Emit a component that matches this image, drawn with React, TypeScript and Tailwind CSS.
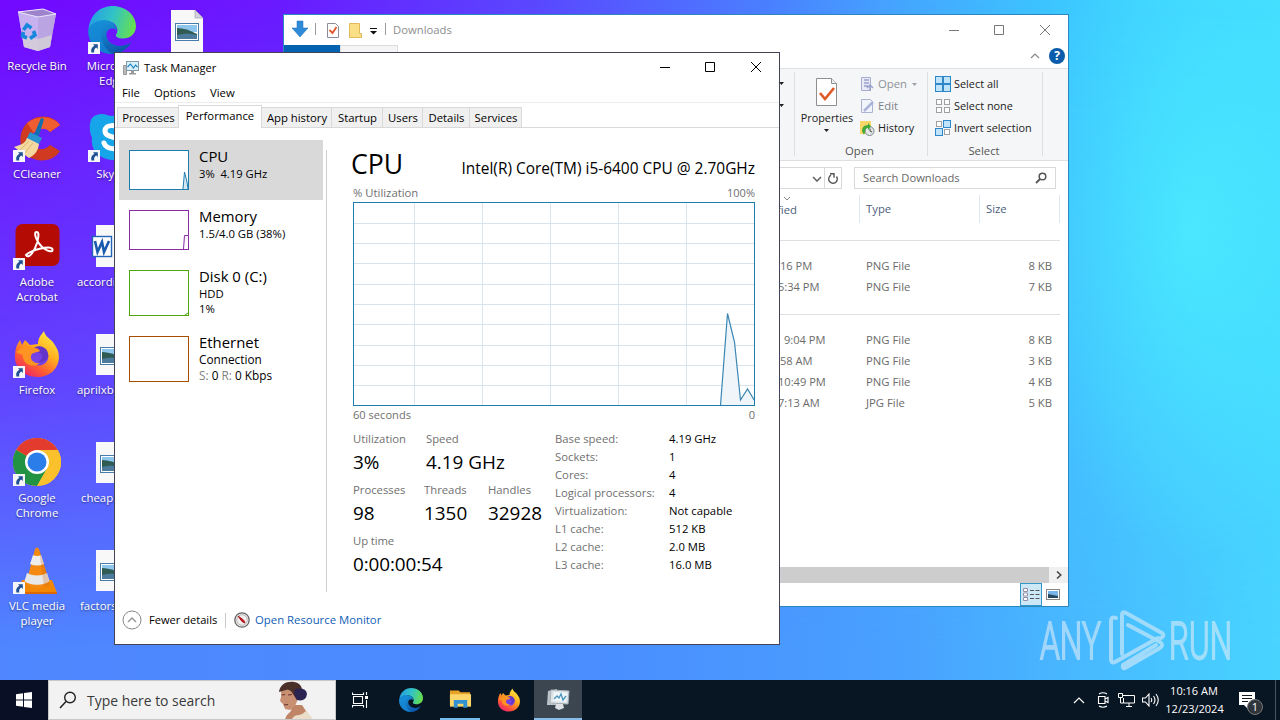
import React from "react";

type P = { className?: string };

/* ---------- shared drawings ---------- */

function Shortcut() {
  return (
    <svg viewBox="0 0 12 12" className="absolute bottom-0 left-0 h-3 w-3">
      <rect width="12" height="12" fill="#f4f6fa" />
      <path d="M5 2.2h4.8V7L8.3 5.6C6.6 6.6 5.8 8 6.2 10.4H3.4C2.6 7.6 3.8 5 6.4 3.8z" fill="#1f4f93" />
    </svg>
  );
}

function RecycleBin() {
  return (
    <svg viewBox="0 0 48 48" className="h-12 w-12">
      <path d="M5 6l25-3 13 5-6 33-12 4-14-4z" fill="#d9cdf6" opacity=".8" />
      <path d="M5 6l20 5 0 34-14-4z" fill="#c8b4ee" opacity=".75" />
      <path d="M25 11l18-3-6 33-12 4z" fill="#b9a4dc" opacity=".8" />
      <path d="M9 30l16 3v12l-14-4zM25 33l14-4-2 12-12 4z" fill="#d6d2d6" opacity=".8" />
      <path d="M5 6l25-3 13 5-18 3z" fill="#9c83cb" stroke="#ece6fb" strokeWidth="1" />
      <g fill="none" stroke="#1787dc" strokeWidth="3.6">
        <path d="M10.500 24l3.500-5 4.500 3" />
        <path d="M20.500 25l1.500 4-5 3.500" />
        <path d="M14 32l-4.500-2 1-4" />
      </g>
    </svg>
  );
}

function EdgeLogo({ className }: P) {
  const id = React.useId();
  return (
    <svg viewBox="0 0 48 48" className={className}>
      <defs>
        <linearGradient id={id + "a"} x1="0" y1=".3" x2="1" y2=".5">
          <stop offset="0" stopColor="#239de4" />
          <stop offset=".5" stopColor="#32c3c6" />
          <stop offset="1" stopColor="#67df4c" />
        </linearGradient>
        <linearGradient id={id + "b"} x1="0" y1="0" x2=".6" y2="1">
          <stop offset="0" stopColor="#1b9de2" />
          <stop offset="1" stopColor="#0c57ab" />
        </linearGradient>
      </defs>
      <path d="M.5 23C2 9 12 0 24.500 0 38 0 48 9.500 48 20c0 8-6 12.500-13 12.500-5 0-8-2-7-4 3-4 1-11-6-13C13 13 4 16 .5 23z" fill={`url(#${id}a)`} />
      <path d="M.5 23C4 15 14 12 22 15.500c5 2 7 6 6.500 9-1-3-9-3-10 3-1 8 8 14 17 12 4-.8 6-2 8-3.500C39 44 32 48 24 48 10 48-1 37 .5 23z" fill={`url(#${id}b)`} />
      <path d="M16 19c-5 9-3 21 8 29C11 48-1 38 .5 23 5 15 14 14 18 17z" fill="#1689d6" opacity=".75" />
    </svg>
  );
}

function CCleaner() {
  return (
    <svg viewBox="0 0 48 48" className="h-12 w-12">
      <path d="M47 11L37 18c-5-6-16-4-18 5-2 10 9 17 18 8l10 6C40 48 25 49 15 42 3 32 6 13 18 6c10-6 23-4 29 5z" fill="#cf3a20" />
      <path d="M47 11L37 18c-4-5-12-4-16 1L14 9c11-8 26-7 33 2z" fill="#f05d31" />
      <path d="M28 4l3 1-6 20-5-2z" fill="#146fae" />
      <path d="M17 18l12 6-4 8-12-6z" fill="#2993cf" />
      <path d="M14 24l12 6c-1 7-4 11-10 14L1 33c6-2 11-3 13-9z" fill="#f3d9a0" />
      <path d="M16 27L7 36M20 29l-9 11" stroke="#dcb877" strokeWidth="1" />
    </svg>
  );
}

function SkypeLogo() {
  return (
    <svg viewBox="0 0 48 48" className="h-12 w-12">
      <path d="M4 4c6-6 14-4 18-2 16-2 25 12 22 24 4 7 2 20-10 19C18 49 2 40 4 24 1 18 1 8 4 4z" fill="#15a5e8" />
      <path d="M32 16c-3-6-15-6-15 1 0 8 15 4 15 12 0 8-14 7-16 0" fill="none" stroke="#fff" strokeWidth="5" strokeLinecap="round" />
    </svg>
  );
}

function Acrobat() {
  return (
    <svg viewBox="0 0 48 48" className="h-12 w-12">
      <rect x="2.500" y="2" width="44" height="42" rx="7" fill="#b50b05" />
      <path d="M13 33c3 5 9-5 11-12 2-8 2-11-.5-11-3.500 0 0 11 7.500 16.500 4 3 9 4 8.500 1-1-4.500-21 0-26.500 5.500z" fill="none" stroke="#fff" strokeWidth="2" />
    </svg>
  );
}

function FirefoxLogo({ className }: P) {
  const id = React.useId();
  return (
    <svg viewBox="0 0 48 48" className={className}>
      <defs>
        <linearGradient id={id} x1=".85" y1="0" x2=".2" y2="1">
          <stop offset="0" stopColor="#fff04a" />
          <stop offset=".4" stopColor="#ffb01e" />
          <stop offset=".72" stopColor="#ff5a33" />
          <stop offset="1" stopColor="#e81f77" />
        </linearGradient>
      </defs>
      <path d="M31 1c1 5 4 6 8 10 3 4 5 7 6 10 4 14-6 26-21 26C10 47 1 37 2 25c0-6 2-11 5-15l2 5 3-5 5 5 8-1c0-6 3-9 6-13z" fill={`url(#${id})`} />
      <circle cx="26" cy="26" r="9.500" fill="#7542e5" />
      <path d="M26 16c6 0 10 5 9 11-2 4-6 6-10 5 7-4 5-10-2-10l-5 2c1-4 4-8 8-8z" fill="#5b2fbe" opacity=".7" />
      <path d="M3 22c5-4 9-7 18-4 3 0 5 1 6 3-4 2-8 1-9 5-1 5 5 8 9 7-7 6-18 1-17-8-3-1-5-2-7-3z" fill="#ff9423" />
    </svg>
  );
}

function ChromeLogo() {
  return (
    <svg viewBox="0 0 48 48" className="h-12 w-12">
      <circle cx="24" cy="24" r="24" fill="#fbc12d" />
      <path d="M24 24L3.200 12A24 24 0 0 1 44.800 12z" fill="#e33b2e" />
      <path d="M24 24L3.200 12A24 24 0 0 0 24 48L34.400 30z" fill="#229342" />
      <path d="M24 12h20.800A24 24 0 0 1 24 48L34.400 30z" fill="#fbc12d" />
      <circle cx="24" cy="24" r="12" fill="#fff" />
      <circle cx="24" cy="24" r="9.500" fill="#2b7de9" />
    </svg>
  );
}

function VlcLogo() {
  return (
    <svg viewBox="0 0 48 48" className="h-12 w-12">
      <path d="M9 34h30l5 13v1H7V40z" fill="#f28705" />
      <path d="M7 46h37v2H7z" fill="#dd6900" />
      <path d="M22 3q2-3 4 0l11 35c-5 5-19 5-24 0z" fill="#f58a13" />
      <path d="M20 9q4 2 8 0l3 9q-7 3-14 0z" fill="#eeeeee" />
      <path d="M14 27q10 5 20 0l2.500 8c-5 5-20 5-25 0z" fill="#e8e8e8" />
      <path d="M26 3l11 35q-3 3-6 3z" fill="#c95a00" opacity=".25" />
    </svg>
  );
}

function PictureFile({ fold }: { fold?: boolean }) {
  return (
    <svg viewBox="0 0 48 48" className="h-12 w-12">
      <path d={fold ? "M8 4h24l8 8v35H8z" : "M8 4h32v41H8z"} fill="#f8f8f8" />
      {fold && <path d="M32 4v8h8z" fill="#d2d2dc" stroke="#a5a5b4" strokeWidth=".7" />}
      <rect x="12.500" y="17.500" width="23" height="17" fill="#fff" stroke="#477ba9" />
      <path d="M14 19h20v7H14z" fill="#8dc5ec" />
      <path d="M14 22q9 0 20 6v2H14z" fill="#2f5b52" />
      <path d="M14 29q10-3 20 0v4H14z" fill="#4c7b9c" />
    </svg>
  );
}

function WordFile() {
  return (
    <svg viewBox="0 0 48 48" className="h-12 w-12">
      <path d="M8 3h32v42H8z" fill="#f8f8f8" />
      <rect x="4.500" y="14.500" width="19" height="20" fill="#fff" stroke="#2164b8" strokeWidth="1.400" />
      <path d="M7 19l2.500 11 4.500-10 2 10L21 19" fill="none" stroke="#1a5bb0" strokeWidth="2.600" />
    </svg>
  );
}

/* ---------- desktop ---------- */

function DesktopItem({ icon, label, shortcut = true }: { icon: React.ReactNode; label: React.ReactNode; shortcut?: boolean }) {
  return (
    <div className="flex h-[108px] flex-col items-center">
      <div className="relative h-12 w-12">
        {icon}
        {shortcut && <Shortcut />}
      </div>
      <div className="mt-[4px] w-full text-center text-[11.4px] leading-[15px] whitespace-nowrap text-white [text-shadow:0_1px_2px_rgba(0,0,0,.5)]">{label}</div>
    </div>
  );
}

function Desktop() {
  return (
    <div className="relative flex pt-[6px]">
      <div className="flex w-[74px] shrink-0 flex-col">
        <DesktopItem icon={<RecycleBin />} label="Recycle Bin" shortcut={false} />
        <DesktopItem icon={<CCleaner />} label="CCleaner" />
        <DesktopItem icon={<Acrobat />} label={<>Adobe<br />Acrobat</>} />
        <DesktopItem icon={<FirefoxLogo className="h-12 w-12" />} label="Firefox" />
        <DesktopItem icon={<ChromeLogo />} label={<>Google<br />Chrome</>} />
        <DesktopItem icon={<VlcLogo />} label={<>VLC media<br />player</>} />
      </div>
      <div className="flex w-[76px] shrink-0 flex-col">
        <DesktopItem icon={<EdgeLogo className="h-12 w-12" />} label={<>Microsoft<br />Edge</>} />
        <DesktopItem icon={<SkypeLogo />} label="Skype" />
        <DesktopItem icon={<WordFile />} label={<div className="pl-[3px] text-left">accordi</div>} shortcut={false} />
        <DesktopItem icon={<PictureFile />} label={<div className="pl-[3px] text-left">aprilxb</div>} shortcut={false} />
        <DesktopItem icon={<PictureFile />} label={<div className="pl-[7px] text-left">cheapl</div>} shortcut={false} />
        <DesktopItem icon={<PictureFile />} label={<div className="pl-[6px] text-left">factors</div>} shortcut={false} />
      </div>
      <div className="flex w-[74px] shrink-0 flex-col">
        <DesktopItem icon={<PictureFile fold />} label="" shortcut={false} />
      </div>
    </div>
  );
}

function Watermark() {
  return (
    <svg viewBox="0 0 200 68" className="absolute top-[606px] left-[1036px] h-[68px] w-[200px] overflow-visible opacity-60">
      <g fill="#dcecf8" fontFamily="Roboto, sans-serif" fontSize="51.500" fontWeight="300" stroke="#dcecf8" strokeWidth="2">
        <text x="4" y="53" textLength="61" lengthAdjust="spacingAndGlyphs">ANY</text>
        <text x="133" y="53" textLength="63" lengthAdjust="spacingAndGlyphs">RUN</text>
      </g>
      <g fill="none" stroke="#dcecf8" strokeWidth="4" strokeLinejoin="round" strokeLinecap="round">
        <path d="M80 12q-5-2-5 3v38q0 5 4 3l43-24" />
        <path d="M86 48V9q0-4 4-2l36 20q3 3-1 5" />
        <path d="M92 19l32 17q4 3 0 6L89 62q-3 1-2-3l33-20" />
      </g>
    </svg>
  );
}

/* ---------- window controls ---------- */

function Controls({ color }: { color: string }) {
  return (
    <div className="flex h-[30px]" style={{ color }}>
      {["M1 5.500h10", "M.5 .5h9v9h-9z", "M0 0l10 10M10 0L0 10"].map((d, i) => (
        <div key={i} className="flex w-[46px] items-center justify-center">
          <svg viewBox="0 0 10 10" className="h-[10px] w-[10px] overflow-visible">
            <path d={d} fill="none" stroke="currentColor" strokeWidth="1" />
          </svg>
        </div>
      ))}
    </div>
  );
}

/* ---------- file explorer ---------- */

function SelectGlyph({ kind }: { kind: "all" | "none" | "invert" }) {
  const on = kind === "all" ? [1, 1, 1, 1] : kind === "none" ? [0, 0, 0, 0] : [0, 1, 1, 0];
  return (
    <svg viewBox="0 0 16 16" className="h-4 w-4">
      {on.map((v, i) => {
        const x = (i % 2) * 8;
        const y = Math.floor(i / 2) * 8;
        return v ? (
          <rect key={i} x={x + 0.5} y={y + 0.5} width="7" height="7" fill="#bfe3fa" stroke="#2f87c8" />
        ) : (
          <rect key={i} x={x + 1.5} y={y + 1.5} width="5" height="5" fill="#fff" stroke="#a0a0a0" />
        );
      })}
    </svg>
  );
}

function FileRow({ date, pad, type, size }: { date: string; pad: string; type: string; size: string }) {
  return (
    <div className="flex h-[21px] items-center text-[#6b6b6b]">
      <div className={"w-[88px] whitespace-nowrap text-[11.1px] " + pad}>{date}</div>
      <div className="w-[120px]">{type}</div>
      <div className="w-[66px] text-right">{size}</div>
    </div>
  );
}

function Explorer() {
  return (
    <div className="absolute top-[14px] left-[283px] flex h-[593px] w-[786px] flex-col border border-[#2c86c0] bg-white text-[11.3px]">
      <div className="flex h-[30px] items-center">
        <svg viewBox="0 0 104 20" className="ml-[6px] h-5 w-[104px]">
          <path d="M7 1h6v7h5l-8 9-8-9h5z" fill="#2f8bd8" stroke="#1f6fb8" strokeWidth=".5" />
          <path d="M25.500 3v12M95.500 3v12" stroke="#9a9a9a" />
          <path d="M37.500 3.500h8l3 3v11h-11z" fill="#fff" stroke="#8c8c9c" />
          <path d="M39.500 10l3 3 4-6" fill="none" stroke="#e0562c" strokeWidth="1.800" />
          <path d="M59.500 3.500h10v10h2v4h-12z" fill="#fbdf86" stroke="#e2b958" />
          <path d="M80 8.500h7" stroke="#111" />
          <path d="M80 11h7l-3.500 3.500z" fill="#111" />
        </svg>
        <span className="ml-[-1px] text-[11.3px] text-[#8d8d8d]">Downloads</span>
        <div className="ml-auto"><Controls color="#777" /></div>
      </div>
      <div className="flex h-[23px]">
        <div className="h-full w-[56px] bg-[#0063b1]" />
        <div className="h-full w-[58px] border border-[#dcdcdc] bg-[#f5f5f5]" />
        <svg viewBox="0 0 10 6" className="mt-[8px] ml-auto h-[6px] w-[10px]"><path d="M1 5l4-4 4 4" fill="none" stroke="#888" strokeWidth="1.200" /></svg>
        <div className="mt-[3px] mr-[3px] ml-[9px] flex h-4 w-4 items-center justify-center rounded-full bg-[#0b5cab] text-[12px] font-bold text-white">?</div>
      </div>
      <div className="flex h-[93px] justify-end border-y border-[#dddfe1] bg-[#f5f6f7] pt-[3px] pb-[4px] text-[#222]">
        <div className="flex w-[300px] flex-col items-end pt-[9px] pr-[10px]">
          <svg viewBox="0 0 5 26" className="h-[26px] w-[5px]"><path d="M0 1h5L2.500 4zM0 23h5l-2.500 3z" fill="#222" /></svg>
        </div>
        <div className="flex w-[133px] flex-col border-l border-[#dddfe1]">
          <div className="flex h-[72px] shrink-0">
            <div className="flex w-[64px] flex-col items-center pt-[5px]">
              <svg viewBox="0 0 24 30" className="h-[30px] w-6">
                <path d="M1.500 1.500h15l5 5v22h-20z" fill="#fff" stroke="#8f8f8f" />
                <path d="M16.500 1.500v5h5" fill="#eee" stroke="#8f8f8f" />
                <path d="M5 16l5 6 9-11" fill="none" stroke="#df5a24" strokeWidth="2.700" />
              </svg>
              <span className="mt-[3px] text-[10.800px] leading-[15px]">Properties</span>
              <svg viewBox="0 0 5 3" className="mt-[4px] -ml-px h-[3px] w-[5px]"><path d="M0 0h5L2.500 3z" fill="#222" /></svg>
            </div>
            <div className="flex flex-col pt-px">
              <div className="flex h-[22px] items-center gap-[3px] text-[#8e939b]">
                <svg viewBox="0 0 16 16" className="h-4 w-4"><path d="M2.500 1.500h9v13h-9z" fill="#e8eaf6" stroke="#a7acd2" /><path d="M5 4h5M5 7h5M5 10h4M11 15l0-6M8 12l3-3 3 3" stroke="#9ba3cc" strokeWidth="1.500" fill="none" /></svg>
                Open
                <svg viewBox="0 0 5 3" className="ml-[2px] h-[3px] w-[5px]"><path d="M0 0h5L2.500 3z" fill="#a0a0a8" /></svg>
              </div>
              <div className="flex h-[22px] items-center gap-[3px] text-[#7e838b]">
                <svg viewBox="0 0 16 16" className="h-4 w-4"><path d="M2.500 1.500h9l2 2v11h-11z" fill="#f1f4fb" stroke="#abb3d0" /><path d="M5 13L14 4" stroke="#aab4d8" strokeWidth="2.500" /></svg>
                Edit
              </div>
              <div className="flex h-[22px] items-center gap-[3px] text-[10.900px]">
                <svg viewBox="0 0 16 16" className="h-4 w-4"><path d="M1 1h11v13H1z" fill="#f8d667" /><circle cx="10.500" cy="11" r="4.500" fill="#e0e7e4" stroke="#7d8790" /><path d="M3 11q0-6 6-6V3l3 3.500L9 10V8q-3 0-3 4l-1 3z" fill="#41a839" /><path d="M11 8.500V11l2 1" fill="none" stroke="#444" /></svg>
                History
              </div>
            </div>
          </div>
          <div className="pr-[3px] text-center leading-[13px] text-[#555]">Open</div>
        </div>
        <div className="mr-[25px] flex w-[116px] flex-col border-x border-[#dddfe1]">
          <div className="flex h-[72px] shrink-0 flex-col pt-px pl-[7px] text-[10.900px]">
            {(["all", "none", "invert"] as const).map((k, i) => (
              <div key={k} className="flex h-[22px] items-center gap-[3px] whitespace-nowrap">
                <SelectGlyph kind={k} />
                {["Select all", "Select none", "Invert selection"][i]}
              </div>
            ))}
          </div>
          <div className="pr-[2px] text-center leading-[13px] text-[#555]">Select</div>
        </div>
      </div>
      <div className="flex h-[34px] items-center justify-end pr-[12px]">
        <div className="flex h-[22px] w-[500px] items-center justify-end border border-[#d9d9d9]">
          <svg viewBox="0 0 10 6" className="mt-[2px] mr-[2px] h-[6px] w-[10px]"><path d="M1 1l4 4 4-4" fill="none" stroke="#666" strokeWidth="1.600" /></svg>
          <div className="flex h-full w-[17px] items-center justify-center border-l border-[#d9d9d9]">
            <svg viewBox="0 0 12 12" className="mt-px h-3 w-3"><path d="M9.500 3.500A4.300 4.300 0 1 1 4 2.200M3 .8h4v4" fill="none" stroke="#555" strokeWidth="1.400" /></svg>
          </div>
        </div>
        <div className="ml-[12px] flex h-[22px] w-[202px] items-center border border-[#d9d9d9] pr-[8px] pl-[8px] text-[11.200px] text-[#686868]">
          Search Downloads
          <svg viewBox="0 0 12 12" className="ml-auto h-3 w-3"><circle cx="7.500" cy="4.500" r="3.300" fill="none" stroke="#555" strokeWidth="1.500" /><path d="M5 7L1 11" stroke="#555" strokeWidth="1.800" /></svg>
        </div>
      </div>
      <div className="flex h-[45px] justify-end pr-[8px] text-[#4c607a]">
        <div className="flex w-[85px] flex-col pt-[1px]">
          <svg viewBox="0 0 8 5" className="ml-[9px] h-[5px] w-[8px]"><path d="M1 1l3 3 3-3" fill="none" stroke="#888" /></svg>
          <span className="mt-px ml-[3px] leading-[15px]">fied</span>
        </div>
        <div className="flex h-[28px] w-[120px] items-center border-l border-[#dfe7f0] pl-[6px]">Type</div>
        <div className="flex h-[28px] w-[81px] items-center border-x border-[#dfe7f0] pl-[6px]">Size</div>
      </div>
      <div className="ml-[494px] flex w-[282px] flex-col">
        <div className="h-[16px] border-t border-[#dfdfdf]" />
        <FileRow date="16 PM" pad="pl-[2px]" type="PNG File" size="8 KB" />
        <FileRow date="5:34 PM" pad="pl-0" type="PNG File" size="7 KB" />
        <div className="mt-[16px] h-[16px] border-t border-[#dfdfdf]" />
        <FileRow date="9:04 PM" pad="pl-[6px]" type="PNG File" size="8 KB" />
        <FileRow date="58 AM" pad="pl-[2px]" type="PNG File" size="3 KB" />
        <FileRow date="10:49 PM" pad="pl-0" type="PNG File" size="4 KB" />
        <FileRow date="7:13 AM" pad="pl-0" type="JPG File" size="5 KB" />
      </div>
      <div className="mt-auto flex h-[16px] bg-[#f0f0f0]">
        <div className="flex-1 bg-[#cdcdcd]" />
        <div className="flex w-[19px] items-center justify-center pl-px"><svg viewBox="0 0 6 8" className="h-2 w-[6px]"><path d="M1 .5L4.800 4 1 7.500" fill="none" stroke="#444" strokeWidth="1.500" /></svg></div>
      </div>
      <div className="flex h-[23px] items-center justify-end pr-[8px]">
        <div className="flex h-full w-[22px] items-center justify-center border border-[#3397c9] bg-[#cce8f6]">
          <svg viewBox="0 0 17 13" className="h-[13px] w-[17px]"><path d="M.5 .5h4v3h-4zM.5 5h4v3h-4zM.5 9.500h4v3h-4z" fill="#fff" stroke="#9a8fa8" /><path d="M7 2.500h4M12.500 2.500h4M7 6.500h4M12.500 6.500h4M7 10.500h4M12.500 10.500h4" stroke="#555" /></svg>
        </div>
        <svg viewBox="0 0 14 12" className="ml-[4px] h-3 w-[14px]"><rect x=".5" y=".5" width="13" height="10" fill="#fff" stroke="#888" /><path d="M2 2h10v7H2z" fill="#78b5e8" /><path d="M2 5l10 2v2H2z" fill="#28475c" /></svg>
      </div>
    </div>
  );
}

/* ---------- task manager ---------- */

const tabs: [string, string][] = [
  ["Processes", "w-[61px]"],
  ["Performance", "w-[84px]"],
  ["App history", "w-[70px]"],
  ["Startup", "w-[51px]"],
  ["Users", "w-[40px]"],
  ["Details", "w-[47px]"],
  ["Services", "w-[52px]"],
];

function Thumb({ h, color, d, fill }: { h: number; color: string; d?: string; fill?: string }) {
  return (
    <svg width="60" height={h} viewBox={`0 0 60 ${h}`} className="shrink-0">
      <rect x=".5" y=".5" width="59" height={h - 1} fill="#fff" stroke={color} />
      {d && <path d={d} fill={fill} stroke={color} strokeWidth="1" />}
    </svg>
  );
}

function Chart() {
  const xs = [61.5, 129.5, 197.5, 265.5, 333.5];
  const ys = [21.5, 41.5, 61.5, 82.5, 102.5, 122.5, 143.5, 163.5, 183.5];
  return (
    <svg width="402" height="204" viewBox="0 0 402 204">
      <rect x=".5" y=".5" width="401" height="203" fill="#fff" />
      {xs.map((x) => <path key={x} d={`M${x} 1v202`} stroke="#d9e6ef" />)}
      {ys.map((y) => <path key={y} d={`M1 ${y}h400`} stroke="#d9e3ec" />)}
      <path d="M367.500 203.500L374.500 111.500 381.500 140 387.500 198 394.500 187 401.500 198.500V203.500z" fill="#eef4fa" fillOpacity=".9" />
      <path d="M367.500 203.500L374.500 111.500 381.500 140 387.500 198 394.500 187 401.500 198.500" fill="none" stroke="#3a86b4" strokeWidth="1.200" />
      <rect x=".5" y=".5" width="401" height="203" fill="none" stroke="#1f7dae" />
    </svg>
  );
}

function Stat({ label, value, w }: { label: string; value: string; w: string }) {
  return (
    <div className={"flex h-[51px] flex-col whitespace-nowrap " + w}>
      <span className="leading-[16px] text-[#707070]">{label}</span>
      <span className="text-[18.900px] leading-[30px]">{value}</span>
    </div>
  );
}

const facts = [
  ["Base speed:", "4.19 GHz"],
  ["Sockets:", "1"],
  ["Cores:", "4"],
  ["Logical processors:", "4"],
  ["Virtualization:", "Not capable"],
  ["L1 cache:", "512 KB"],
  ["L2 cache:", "2.0 MB"],
  ["L3 cache:", "16.0 MB"],
];

function MonitorIcon({ className }: P) {
  return (
    <svg viewBox="0 0 16 16" className={className}>
      <path d="M.5 5.500h3v9h-3z" fill="#bbb" stroke="#999" />
      <rect x="3.500" y="1.500" width="12" height="9" fill="#d9effa" stroke="#8199a7" />
      <path d="M4.500 7l3-3 3 4 2-3 2 2" fill="none" stroke="#1683bd" strokeWidth="1.100" />
      <path d="M8 11h3v2H8zM6 13h7v1.500H6z" fill="#999" />
    </svg>
  );
}

function SideItem({ name, thumb, children, cls }: { name: string; thumb: React.ReactNode; children: React.ReactNode; cls: string }) {
  return (
    <div className={"flex gap-[10px] pt-[10px] pl-[10px] " + cls}>
      {thumb}
      <div className="flex flex-col whitespace-nowrap">
        <span className="-mt-[2px] text-[14.900px] leading-[17px]">{name}</span>
        {children}
      </div>
    </div>
  );
}

function TaskManager() {
  return (
    <div className="absolute top-[52px] left-[114px] flex h-[593px] w-[666px] flex-col border border-[#43435a] bg-white text-[11.3px] text-black">
      <div className="flex h-[30px] items-center">
        <MonitorIcon className="ml-[8px] h-4 w-4" />
        <span className="ml-[5px] text-[11.100px]">Task Manager</span>
        <div className="-mt-[2px] ml-auto"><Controls color="#000" /></div>
      </div>
      <div className="flex h-[20px] items-center border-b border-[#ececec] pt-px pl-[7px]">
        <span className="w-[32px]">File</span>
        <span className="w-[56px]">Options</span>
        <span>View</span>
      </div>
      <div className="flex h-[25px] items-end border-b border-[#d9d9d9] pl-[2px]">
        {tabs.map(([t, w], i) =>
          t === "Performance" ? (
            <div key={t} className={"-mb-px flex h-[23px] items-center justify-center border border-b-0 border-[#d9d9d9] bg-white pb-px " + w}>{t}</div>
          ) : (
            <div key={t} className={"flex h-[20px] items-center justify-center border-t border-r border-[#d9d9d9] bg-[#f0f0f0] pt-px pl-px whitespace-nowrap " + w + (i === 0 ? " border-l border-r-0" : "")}>{t}</div>
          )
        )}
      </div>
      <div className="flex h-[464px] shrink-0 pt-[12px]">
        <div className="ml-[4px] flex w-[204px] flex-col">
          <SideItem name="CPU" cls="h-[60px] bg-[#d9d9d9]" thumb={<Thumb h={40} color="#1f7dae" d="M54 39L55.500 22 58 32 59 39" fill="#d5e8f3" />}>
            <span className="text-[11.200px] leading-[17px]">3%&nbsp; 4.19 GHz</span>
          </SideItem>
          <SideItem name="Memory" cls="h-[60px]" thumb={<Thumb h={40} color="#8a2da5" d="M54.500 39L55.500 25.500H59.500" fill="#faf3fc" />}>
            <span className="leading-[17px]">1.5/4.0 GB (38%)</span>
          </SideItem>
          <SideItem name="Disk 0 (C:)" cls="h-[66px]" thumb={<Thumb h={46} color="#4da60c" d="M56 45l3-2" fill="none" />}>
            <span className="leading-[17px]">HDD</span>
            <span className="leading-[14px]">1%</span>
          </SideItem>
          <SideItem name="Ethernet" cls="h-[66px]" thumb={<Thumb h={46} color="#a74f01" />}>
            <span className="text-[11.800px] leading-[17px]">Connection</span>
            <span className="text-[11.800px] leading-[14px]"><span className="text-[#808080]">S:</span> 0 <span className="text-[#808080]">R:</span> 0 Kbps</span>
          </SideItem>
        </div>
        <div className="mt-[10px] ml-[3px] h-[442px] w-px bg-[#cfcfcf]" />
        <div className="ml-[26px] flex w-[402px] flex-col">
          <div className="flex h-[45px] items-start justify-between">
            <span className="-ml-[2px] pt-[9px] text-[26.600px] leading-[30px]">CPU</span>
            <span className="pt-[18px] text-[15.450px] leading-[20px] whitespace-nowrap">Intel(R) Core(TM) i5-6400 CPU @ 2.70GHz</span>
          </div>
          <div className="mb-px flex h-[16px] items-center justify-between text-[#707070]"><span>% Utilization</span><span className="text-[11px]">100%</span></div>
          <Chart />
          <div className="flex h-[18px] items-center justify-between text-[11.100px] text-[#707070]"><span>60 seconds</span><span>0</span></div>
          <div className="mt-[7px] flex">
            <div className="flex w-[202px] flex-col">
              <div className="flex"><Stat label="Utilization" value="3%" w="w-[73px]" /><Stat label="Speed" value="4.19 GHz" w="w-[90px]" /></div>
              <div className="flex"><Stat label="Processes" value="98" w="w-[71px]" /><Stat label="Threads" value="1350" w="w-[64px]" /><Stat label="Handles" value="32928" w="w-[60px]" /></div>
              <Stat label="Up time" value="0:00:00:54" w="w-[120px] tracking-[-.1px]" />
            </div>
            <div className="-mt-px flex flex-col">
              {facts.map(([a, b]) => (
                <div key={a} className="flex h-[18px] items-center whitespace-nowrap"><span className="w-[114px] text-[#707070]">{a}</span><span>{b}</span></div>
              ))}
            </div>
          </div>
        </div>
      </div>
      <div className="mt-[16px] flex h-[24px] items-center pl-[7px]">
        <svg viewBox="0 0 20 20" className="h-5 w-5"><circle cx="10" cy="10" r="9" fill="none" stroke="#888" /><path d="M6 12l4-4 4 4" fill="none" stroke="#999" strokeWidth="1.500" /></svg>
        <span className="ml-[7px] w-[76px] text-[11.100px]">Fewer details</span>
        <div className="h-[15px] w-px bg-[#c8c8c8]" />
        <svg viewBox="0 0 16 16" className="mr-[5px] ml-[8px] h-4 w-4"><circle cx="8" cy="8" r="7.200" fill="#f2eeee" stroke="#666" strokeWidth="1.300" /><circle cx="8" cy="8" r="5.300" fill="none" stroke="#aaa" strokeWidth=".8" /><path d="M4 4l5.500 4L11 11 8 9.500z" fill="#cf1820" stroke="#a90f18" /></svg>
        <span className="text-[11.350px] text-[#1260b8]">Open Resource Monitor</span>
      </div>
    </div>
  );
}

/* ---------- taskbar ---------- */

function Portrait() {
  return (
    <svg viewBox="0 0 42 38" className="h-[38px] w-[42px]">
      <path d="M7 38q2-5 6-8l1-6h10l4 6 6 8z" fill="#c08566" />
      <path d="M3 9h14l3 9-3 7-5 4-5-1-2-5-3-3 1-4z" fill="#c98f72" />
      <path d="M1 11C2 3 9 0 16 1c7 1 9 6 8 13l-5 5-4-6q-3-5-7-4z" fill="#4b2f29" />
      <path d="M17 8q11-2 12 5-1 8-10 6-4-5-2-11z" fill="#2b2352" />
      <path d="M14 38q2-4 7-4 4-1 7-4l7 8z" fill="#eaddca" />
      <path d="M4 14l3-.5M10 14l4-.5M6 24l4-.5" stroke="#64352f" strokeWidth="1.100" />
    </svg>
  );
}

function Taskbar() {
  return (
    <div className="absolute bottom-0 left-0 flex h-[40px] w-full items-stretch bg-[#081522] text-white">
      <div className="flex w-[48px] items-center justify-center bg-[#090f24]">
        <svg viewBox="0 0 16 16" className="h-4 w-4"><path d="M0 2.200L7 1.200v6.300H0zM8 1l8-1v7.500H8zM0 8.500h7v6.300l-7-1zM8 8.500h8V16l-8-1z" fill="#fff" /></svg>
      </div>
      <div className="flex w-[288px] items-center border border-[#c8c8c8] bg-[#f2f2f2] text-[#3a3a3a]">
        <svg viewBox="0 0 18 18" className="ml-[10px] h-[18px] w-[18px]"><circle cx="11" cy="6.500" r="5.300" fill="none" stroke="#222" strokeWidth="1.400" /><path d="M7 10.500L1 17" stroke="#222" strokeWidth="1.500" /></svg>
        <span className="ml-[10px] pt-[2px] text-[13.950px]">Type here to search</span>
        <div className="mr-[15px] ml-auto"><Portrait /></div>
      </div>
      <div className="flex w-[48px] items-center justify-center">
        <svg viewBox="0 0 16 16" className="h-4 w-4"><path d="M1.500 4.500h9v7h-9zM.5 2.500V.5M11.500 2.500V.5M0 2.500h12M0 13.500h12M.5 13.500v2M11.500 13.500v2M14.500 0v3M14.500 8v8" fill="none" stroke="#fff" strokeWidth="1.100" /><path d="M13 4h3v3h-3z" fill="#fff" /></svg>
      </div>
      <div className="flex w-[54px] items-center justify-center"><EdgeLogo className="h-6 w-6" /></div>
      <div className="flex w-[44px] flex-col items-center">
        <div className="flex flex-1 items-center">
          <svg viewBox="0 0 24 20" className="h-5 w-[23px]"><path d="M1 1h9l2 2h10v14H1z" fill="#e8a326" /><path d="M1 5h22v13H1z" fill="#fbd66b" /><path d="M5 19v-8h14v8h-4v-4H9v4z" fill="#3291d3" /></svg>
        </div>
        <div className="h-[2px] w-[40px] bg-[#76b9ed]" />
      </div>
      <div className="flex w-[52px] items-center justify-center pl-px"><FirefoxLogo className="h-6 w-6" /></div>
      <div className="flex w-[48px] flex-col items-center bg-[#3c4650]">
        <div className="flex flex-1 items-center">
          <svg viewBox="0 0 24 24" className="h-6 w-6"><path d="M2 4l9-2v16H1z" fill="#bbc4c8" /><path d="M5 3l18 1-1 13-18-1z" fill="#dfe4e7" stroke="#a8b2b8" /><path d="M8 5l13 .7-.7 9L7 14z" fill="#eff7fb" /><path d="M8 12l3-3 2 2 2-4 2 6 3-4" fill="none" stroke="#4b94bc" strokeWidth="1.300" /><path d="M10 17h7l1 4-5 2-4-2z" fill="#dde1e3" /></svg>
        </div>
        <div className="h-[2px] w-full bg-[#86bdec]" />
      </div>
      <div className="ml-auto flex items-center">
        <svg viewBox="0 0 12 7" className="h-[7px] w-3"><path d="M1 6l5-5 5 5" fill="none" stroke="#fff" strokeWidth="1.200" /></svg>
        <svg viewBox="0 0 12 16" className="ml-[12px] h-4 w-3"><path d="M2 2q4-2.500 8 0M2 14q4 2.500 8 0M1.500 4.500h6.500v7H1.500zM8 7l3-1.500v5L8 9" fill="none" stroke="#fff" strokeWidth="1.100" /></svg>
        <svg viewBox="0 0 17 14" className="ml-[9px] h-[14px] w-[17px]"><path d="M5 2.500h11.500v7.500h-11V5M8 13.500h6M11 10v3M.5 .5h4v4h-4zM2.500 4.500v5.500h3" fill="none" stroke="#fff" strokeWidth="1" /></svg>
        <svg viewBox="0 0 17 14" className="ml-[7px] h-[14px] w-[17px]"><path d="M.5 5h3l3.500-4v12L3.500 9h-3zM9 5q1.500 2 0 4M11.500 3q3 4 0 8M14 1q4.500 6 0 12" fill="none" stroke="#fff" strokeWidth="1.100" /></svg>
        <div className="ml-[6px] flex w-[60px] flex-col text-center text-[11px] leading-[18px] whitespace-nowrap"><span className="-ml-[2px]">10:16 AM</span><span className="-ml-px">12/23/2024</span></div>
        <div className="relative ml-[14px] h-[16px] w-[24px]">
          <svg viewBox="0 0 16 17" className="h-[17px] w-4"><path d="M0 0h16v13h-7v4l-4-4H0z" fill="#fff" /><path d="M3 3.500h10M3 6.500h10M3 9.500h6" stroke="#101820" /></svg>
          <div className="absolute top-[7px] left-[8px] flex h-4 w-4 items-center justify-center rounded-full border border-[#777] bg-[#30353b] text-[11px]">1</div>
        </div>
        <div className="ml-[12px] h-[40px] w-px bg-[#4a545e]" />
        <div className="w-[4px]" />
      </div>
    </div>
  );
}

export default function App() {
  return (
    <div className="relative h-[720px] w-[1280px] overflow-hidden bg-[linear-gradient(90deg,#7308ff_0%,#6a1aff_22%,#5a48ff_42%,#4a80ff_60%,#45a5ff_70%,#3cc8ff_83%,#43dcff_100%)] font-['Open_Sans','Noto_Sans',sans-serif]">
      <div className="absolute inset-0 bg-[linear-gradient(90deg,#4f86ff_0%,#4a8eff_47%,#49a0ff_70%,#48b8ff_84%,#48d4ff_100%)] [mask-image:linear-gradient(180deg,transparent_0%,rgba(0,0,0,.45)_52%,black_90%)]" />
      <div className="absolute inset-0 bg-[radial-gradient(ellipse_170px_330px_at_1190px_230px,rgba(80,250,255,.55),transparent)]" />
      <Desktop />
      <Explorer />
      <TaskManager />
      <Watermark />
      <Taskbar />
    </div>
  );
}
